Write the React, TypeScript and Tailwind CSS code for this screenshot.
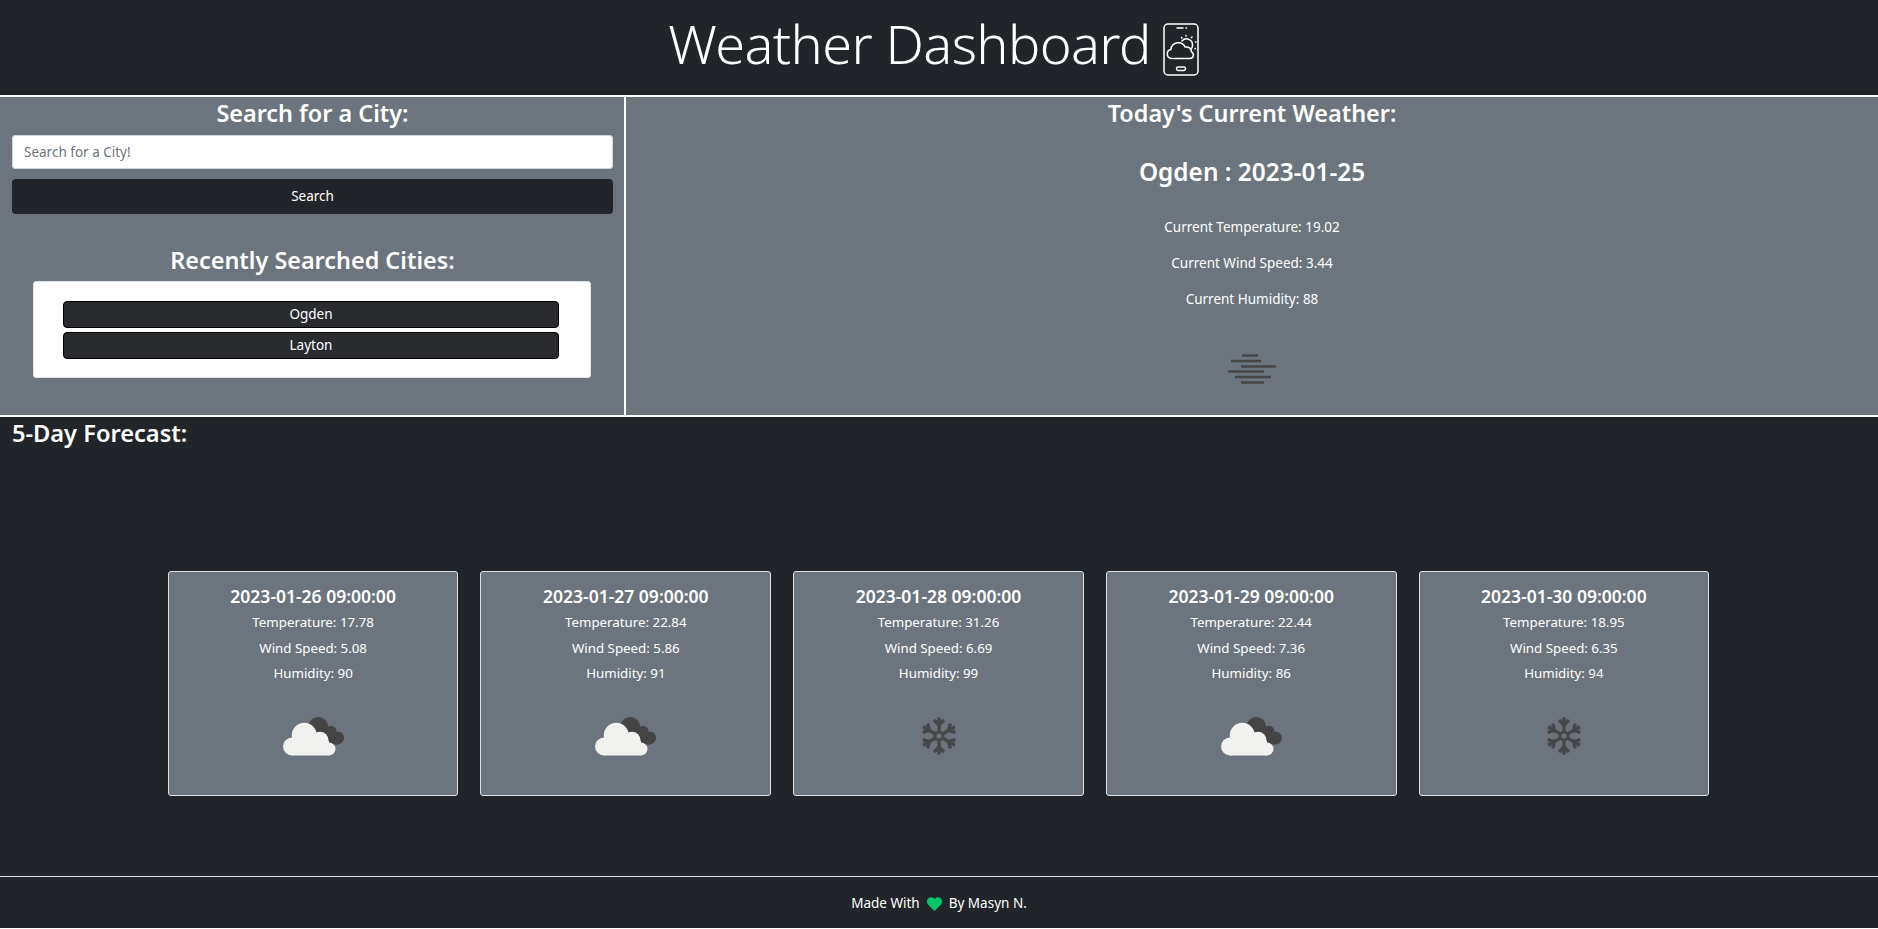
const forecast = [
  { date: '2023-01-26 09:00:00', temp: '17.78', wind: '5.08', humidity: '90', icon: 'clouds' },
  { date: '2023-01-27 09:00:00', temp: '22.84', wind: '5.86', humidity: '91', icon: 'clouds' },
  { date: '2023-01-28 09:00:00', temp: '31.26', wind: '6.69', humidity: '99', icon: 'snow' },
  { date: '2023-01-29 09:00:00', temp: '22.44', wind: '7.36', humidity: '86', icon: 'clouds' },
  { date: '2023-01-30 09:00:00', temp: '18.95', wind: '6.35', humidity: '94', icon: 'snow' },
];

function PhoneIcon() {
  return (
    <svg width="36" height="53" viewBox="0 0 36 53" fill="none" stroke="white" strokeWidth="1.5" strokeLinecap="round" strokeLinejoin="round">
      <rect x="1" y="1" width="34" height="51" rx="4" />
      <path d="M14 5h6" />
      <path d="M23 5h.5" />
      <rect x="13.5" y="44" width="9" height="3.5" rx="1.7" />
      {/* sun */}
      <path d="M19 18a6 6 0 0 1 10.5 4.5 5 5 0 0 1-2 4" />
      <path d="M23 12.5v.6M29 14l-.5.6M32.5 19h.6M18.5 14.5l.4.5M32 25.5l.5.3" />
      {/* cloud */}
      <path d="M8.5 35.5a4.5 4.5 0 0 1-.6-8.9 7.5 7.5 0 0 1 14.3-2.5 5 5 0 0 1 6.300 4.800 3.500 3.500 0 0 1-1.500 6.600z" />
    </svg>
  );
}

function MistIcon() {
  return (
    <svg width="50" height="30" viewBox="0 0 50 30" stroke="#464646" strokeWidth="2.5" className="block">
      <path d="M14 1.5h16" />
      <path d="M3 7h30" />
      <path d="M13 12.5h35" />
      <path d="M0 17.5h36" />
      <path d="M7 23h36" />
      <path d="M13 28.5h23" />
    </svg>
  );
}

function CloudsIcon() {
  return (
    <svg width="61" height="39" viewBox="0 0 61 39" className="block">
      <g fill="#444444">
        <circle cx="35.3" cy="10" r="10" />
        <circle cx="48" cy="14.3" r="5.5" />
        <circle cx="54.5" cy="21" r="6.5" />
        <path d="M30 12L48 10L55 27.500H40z" />
      </g>
      <g fill="#f1f1ef" stroke="#6c757d" strokeWidth="0">
        <circle cx="21.3" cy="18.3" r="12.5" />
        <circle cx="9" cy="29.500" r="9" />
        <circle cx="37" cy="23.300" r="8.500" />
        <circle cx="46" cy="32" r="6.500" />
        <rect x="9" y="24" width="37" height="14.500" />
      </g>
    </svg>
  );
}

function SnowIcon() {
  return (
    <svg width="36" height="38" viewBox="-18 -19 36 38" fill="none" stroke="#464646" strokeWidth="3.4" className="block">
      {[0, 60, 120, 180, 240, 300].map((a) => (
        <g key={a} transform={`rotate(${a})`}>
          <path d="M0 -5V-18.5" />
          <path d="M-5 -16L0 -11L5 -16" />
        </g>
      ))}
      <circle r="4" strokeWidth="3" />
    </svg>
  );
}

function HeartIcon() {
  return (
    <svg width="15" height="14" viewBox="0 0 15 14" className="inline-block">
      <path fill="#00c868" d="M7.5 14L1 7.5C-.5 5.8-.3 2.5 1.5 1 3.500-.5 6 0 7.500 2 9 0 11.500-.5 13.500 1c1.800 1.500 2 4.800.5 6.500z" />
    </svg>
  );
}

function ForecastCard({ item }: { item: (typeof forecast)[number] }) {
  return (
    <div className="flex h-[225px] w-[290.7px] flex-col items-center rounded-[3px] border border-[#dee2e6] bg-[#6c757d] pt-[12px] text-white">
      <h5 className="text-[17.5px] leading-[24px] font-semibold">{item.date}</h5>
      <p className="mt-[2px] text-[13.3px] leading-[25.5px]">Temperature: {item.temp}</p>
      <p className="text-[13.3px] leading-[25.5px]">Wind Speed: {item.wind}</p>
      <p className="text-[13.3px] leading-[25.5px]">Humidity: {item.humidity}</p>
      <div className="mt-[30px] flex justify-center">
        {item.icon === 'clouds' ? <CloudsIcon /> : <SnowIcon />}
      </div>
    </div>
  );
}

export default function App() {
  return (
    <div className="h-[928px] overflow-hidden bg-[#212529] font-['Noto_Sans','Open_Sans',sans-serif] text-white">
      {/* Header */}
      <header className="flex h-[97px] items-center justify-center gap-[12px] border-b-2 border-white pr-[11px] pb-[2px]">
        <h1 className="mb-[8px] text-[54px] leading-none font-light tracking-[-0.6px]">Weather Dashboard</h1>
        <div className="mt-[6px]">
          <PhoneIcon />
        </div>
      </header>

      <div className="flex h-[320px] border-b-2 border-white bg-[#6c757d]">
        {/* Search column */}
        <section className="flex w-[626px] flex-col border-r-2 border-white pr-[11px] pl-[12px] text-center">
          <h3 className="text-[23.4px] leading-[32px] font-semibold">Search for a City:</h3>
          <input
            placeholder="Search for a City!"
            className="mt-[6px] h-[34px] w-full rounded-[3px] border border-[#ced4da] bg-white px-[11px] text-[13.5px] text-[#212529] outline-none placeholder:text-[#6c757d]"
          />
          <button className="mt-[10px] h-[35px] w-full rounded-[4px] bg-[#212529] text-[13.5px] text-white">Search</button>
          <h3 className="mt-[30px] text-[23.4px] leading-[32px] font-semibold">Recently Searched Cities:</h3>
          <div className="mt-[5px] mr-[22px] ml-[21px] flex h-[97px] flex-col gap-[4px] rounded-[3px] border border-[#dee2e6] bg-white pt-[19px] pr-[31px] pl-[29px]">
            <button className="h-[27px] rounded-[4px] border border-black bg-[#2a2b2e] text-[13.5px] text-white">Ogden</button>
            <button className="h-[27px] rounded-[4px] border border-black bg-[#2a2b2e] text-[13.5px] text-white">Layton</button>
          </div>
        </section>

        {/* Current weather */}
        <section className="flex flex-1 flex-col items-center">
          <h3 className="text-[23.4px] leading-[32px] font-semibold">Today's Current Weather:</h3>
          <h3 className="mt-[27px] text-[24.4px] leading-[32px] font-semibold">Ogden : 2023-01-25</h3>
          <p className="mt-[21px] text-[13.5px] leading-[36px]">Current Temperature: 19.02</p>
          <p className="text-[13.5px] leading-[36px]">Current Wind Speed: 3.44</p>
          <p className="text-[13.5px] leading-[36px]">Current Humidity: 88</p>
          <div className="mt-[37px] ml-[2px]">
            <MistIcon />
          </div>
        </section>
      </div>

      {/* 5-day forecast */}
      <section className="flex h-[460px] flex-col border-b-[1.5px] border-[#dee2e6]">
        <h3 className="px-[12px] text-[23.6px] leading-[32px] font-semibold">5-Day Forecast:</h3>
        <div className="mt-[122px] flex justify-center gap-[22px] pr-[1px]">
          {forecast.map((item) => (
            <ForecastCard key={item.date} item={item} />
          ))}
        </div>
      </section>

      <footer className="flex h-[51px] items-center justify-center pt-[2px] text-[13.5px]">
        <span>Made With</span>
        <span className="mx-[7px] flex items-center">
          <HeartIcon />
        </span>
        <span>By Masyn N.</span>
      </footer>
    </div>
  );
}
